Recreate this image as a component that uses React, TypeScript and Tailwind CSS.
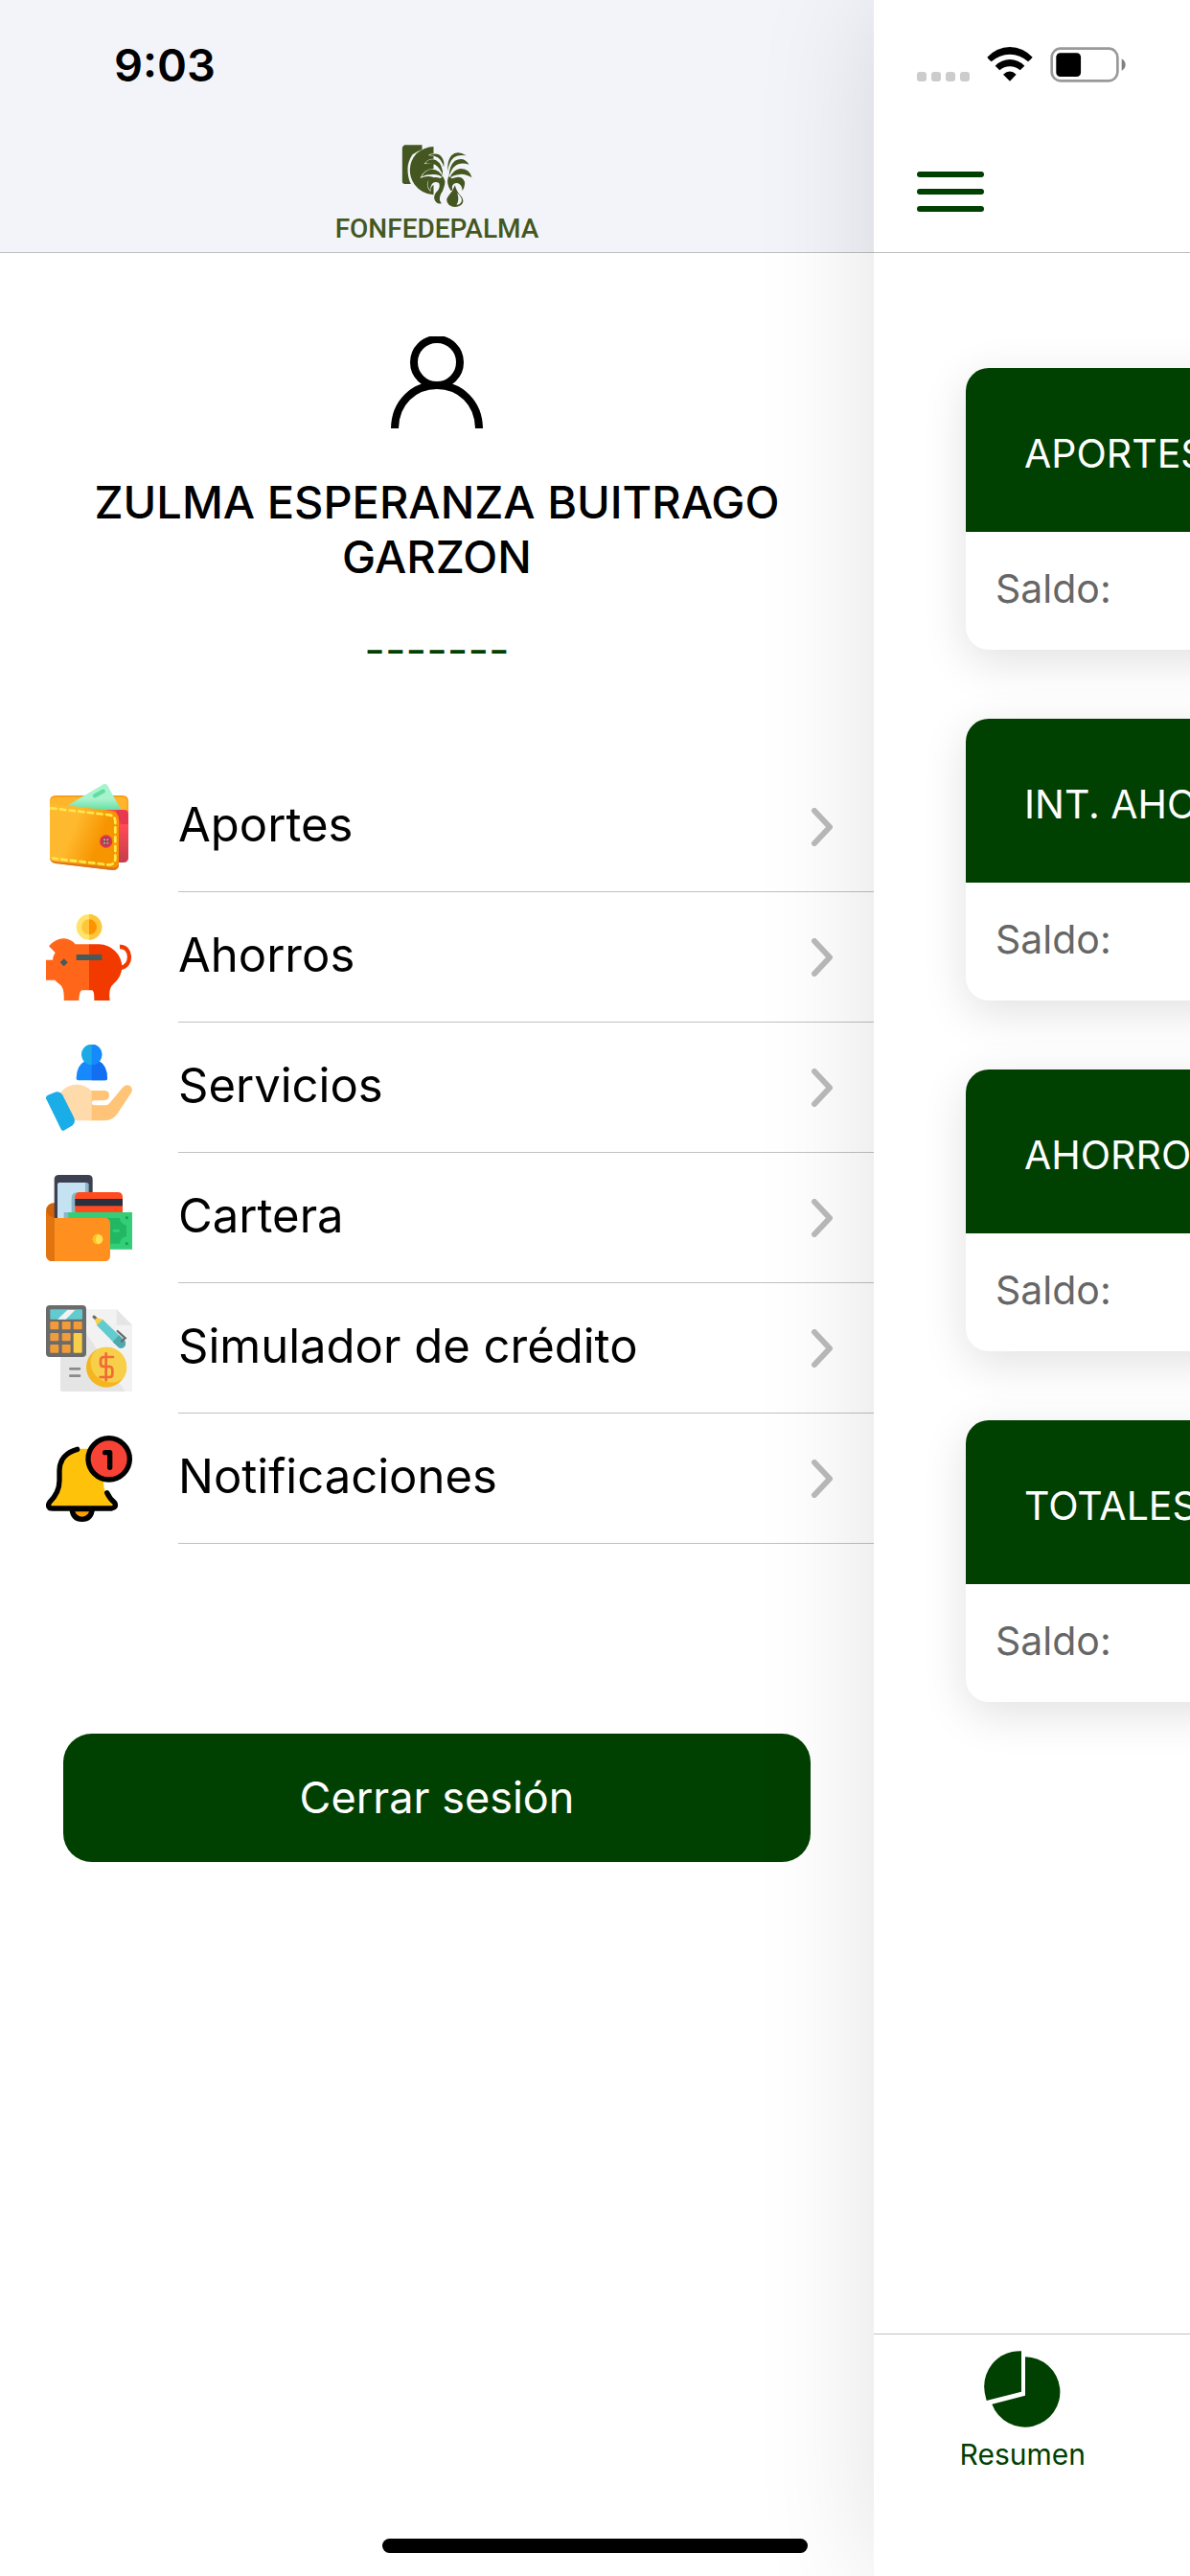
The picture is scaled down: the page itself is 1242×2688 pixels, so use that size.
import { useState } from 'react'
import type { ReactNode } from 'react'

type MenuItem = {
  label: string
  icon: ReactNode
}

function BrandMark() {
  return (
    <svg viewBox="350 60 230 201" className="w-[77px] h-[67px]" fill="#445720" aria-hidden="true">
      <path d="M363 64H417V78Q400 84 387 94Q372 116 372 140Q372 166 382 186H363Q355 186 355 178V73Q357 66 363 64Z" />
      <path d="M453 69V91Q444 90 436 96Q446 97 453 100V107Q434 106 423 124Q438 119 453 121V139Q424 138 411 168Q432 158 453 165V170Q432 172 433 187Q434 202 444 210Q442 196 453 188V220Q415 216 394 188Q378 166 379 140Q380 112 400 90Q424 70 453 69Z" />
      <path d="M440 96Q465 85 478 101Q488 114 485 133Q479 112 466 103Q456 97 440 96Z" />
      <path d="M427 121Q440 104 460 111Q483 124 482 160Q474 136 459 126Q444 119 427 121Z" />
      <path d="M415 163Q426 143 445 140Q473 139 482 166Q468 154 450 156Q430 156 415 163Z" />
      <path d="M443 207Q430 190 437 176Q449 160 474 168L482 163Q492 176 487 191Q483 207 476 217Q467 237 478 247Q459 250 455 231Q454 218 466 207Q475 195 470 183Q456 176 448 186Q442 194 443 207Z" />
      <path d="M497 146Q496 111 509 97Q527 78 555 97Q531 93 517 103Q502 115 497 146Z" />
      <path d="M501 165Q502 128 520 113Q548 99 564 125Q539 117 524 127Q507 139 501 165Z" />
      <path d="M503 169Q511 143 536 138Q566 138 573 166Q551 153 535 156Q514 157 503 169Z" />
      <path d="M500 162L511 169Q535 159 546 171Q557 185 543 208Q543 190 530 184Q517 180 512 191Q509 198 513 205L507 207Q491 184 500 162Z" />
      <path d="M520 190Q526 212 540 225Q552 241 539 252Q519 264 501 251Q488 238 500 223Q514 208 520 190Z" />
      <path d="M527 214Q544 230 541 240Q537 251 525 251Q535 237 527 214Z" fill="#f3f4f9" />
    </svg>
  )
}

function WalletIcon() {
  return (
    <svg viewBox="54 54 270 270" className="w-[90px] h-[90px]" aria-hidden="true">
      <defs>
        <linearGradient id="leather" x1="0" y1="0.2" x2="1" y2="0.6">
          <stop offset="0.35" stopColor="#ffb92e" />
          <stop offset="0.75" stopColor="#f79500" />
        </linearGradient>
        <linearGradient id="note" x1="0" y1="0" x2="0" y2="1">
          <stop offset="0.55" stopColor="#a7f3ce" />
          <stop offset="1" stopColor="#5fdc9b" />
        </linearGradient>
        <linearGradient id="lining" x1="0" y1="0" x2="0" y2="1">
          <stop offset="0.3" stopColor="#ff4b55" />
          <stop offset="1" stopColor="#c43d4b" />
        </linearGradient>
      </defs>
      <path d="M66 108Q66 90 84 90H294Q312 90 312 108V150H66Z" fill="#f9a01b" />
      <path d="M66 112Q68 96 88 96H290Q308 96 308 112V135H66Z" fill="#ffb52b" />
      <path d="M232 56Q239 50 246 58L292 140H200L120 122Z" fill="url(#note)" />
      <path d="M207 91L233 77" stroke="#62dda0" strokeWidth="13" strokeLinecap="round" />
      <path d="M240 135H298Q312 135 312 150V286Q312 300 296 300H270Z" fill="url(#lining)" />
      <path d="M272 136H298Q312 136 312 150V180H288Z" fill="#e8384f" />
      <path d="M66 115L258 138Q282 143 282 166V306Q282 324 262 324L84 303Q66 299 66 284Z" fill="url(#leather)" />
      <path d="M66 284Q68 295 84 297L262 316Q280 318 282 300V306Q282 324 262 324L84 303Q66 299 66 284Z" fill="#dc761c" />
      <path d="M70 130L252 151Q271 154 271 173V288Q269 308 248 307L76 287" fill="none" stroke="#ffe84d" strokeWidth="8" strokeLinecap="round" strokeDasharray="16 13" />
      <circle cx="242" cy="234" r="20" fill="#e0364c" />
      <circle cx="242" cy="234" r="14" fill="#b93650" />
      <g fill="#73e0a9">
        <circle cx="237" cy="229" r="3" />
        <circle cx="247" cy="229" r="3" />
        <circle cx="237" cy="239" r="3" />
        <circle cx="247" cy="239" r="3" />
      </g>
    </svg>
  )
}

function PiggyIcon() {
  return (
    <svg viewBox="54 462 270 270" className="w-[90px] h-[90px]" aria-hidden="true">
      <circle cx="189" cy="502" r="40" fill="#ffe36b" />
      <path d="M189 462A40 40 0 0 1 189 542Z" fill="#ffc63c" />
      <circle cx="189" cy="502" r="24" fill="#ffc63c" />
      <path d="M189 478A24 24 0 0 1 189 526Z" fill="#ff9200" />
      <path d="M285 564C323 562 326 625 287 630" fill="none" stroke="#f23a00" strokeWidth="13" />
      <path d="M63 562Q84 538 110 538Q132 539 146 556H190V700H166Q158 703 157 732H110Q112 696 100 684Q88 675 82 668H54V605H75Q76 592 83 582Z" fill="#ff661a" />
      <path d="M189 556H220Q250 557 270 577Q292 598 292 629Q290 659 265 680Q248 694 254 732H205Q206 702 198 700H189Z" fill="#f23a00" />
      <rect x="149" y="588" width="80" height="18" fill="#455a5a" />
      <path d="M110 601L122 613L110 625L98 613Z" fill="#455a5a" />
    </svg>
  )
}

function ServiceIcon() {
  return (
    <svg viewBox="54 60 270 270" className="w-[90px] h-[90px]" aria-hidden="true">
      <path d="M149 166Q149 125 178 110H218Q246 125 246 166Q246 172 240 172H155Q149 172 149 166Z" fill="#1689ff" />
      <path d="M197 110H218Q246 125 246 166Q246 172 240 172H197Z" fill="#136ff2" />
      <circle cx="197" cy="91" r="32" fill="#1baae5" />
      <path d="M197 59A32 32 0 0 1 197 123Z" fill="#1689ff" />
      <path d="M190 204H236Q252 204 252 219Q252 234 236 235H205Q197 236 197 242Q197 249 205 250H240Q248 250 254 242L294 194Q304 182 317 189Q328 198 321 211L278 276Q263 298 238 298H190Z" fill="#ffc478" />
      <path d="M100 209Q120 185 150 185Q178 185 197 206V298H140Z" fill="#ffdaaa" />
      <path d="M60 218L86 208Q98 206 105 216L141 287Q148 304 137 313L110 329Q104 331 101 325L54 229Q53 221 60 218Z" fill="#1aade8" />
    </svg>
  )
}

function CarteraIcon() {
  return (
    <svg viewBox="54 468 270 270" className="w-[90px] h-[90px]" aria-hidden="true">
      <path d="M54 580Q56 555 84 555V620H54Z" fill="#cf640c" />
      <path d="M80 482Q80 468 94 468H186Q200 468 200 482V610H80Z" fill="#3c4051" />
      <rect x="90" y="492" width="98" height="120" rx="7" fill="#8bb5c9" />
      <path d="M90 499Q90 492 97 492H177V523H150Q134 525 134 540V585H110V603H90Z" fill="#c5e2f3" />
      <path d="M145 538Q145 522 161 522H278Q294 522 294 538V590H145Z" fill="#ff4b20" />
      <rect x="145" y="543" width="149" height="22" fill="#2b2f3d" />
      <path d="M124 585H324V701H124Z" fill="#32cf78" />
      <path d="M240 603H285Q287 621 306 626V660Q287 664 285 683H240Z" fill="#22b763" />
      <circle cx="307" cy="602" r="5" fill="#1ba052" />
      <circle cx="307" cy="683" r="5" fill="#1ba052" />
      <path d="M267 643H281" stroke="#32cf78" strokeWidth="8" strokeLinecap="round" />
      <path d="M54 576Q57 603 84 603H238Q255 603 255 620V720Q255 738 238 738H75Q54 738 54 716Z" fill="#ff901f" />
      <path d="M54 576Q57 598 81 603V738H75Q54 738 54 716Z" fill="#e1740f" />
      <circle cx="216" cy="669" r="16" fill="#ffdf50" />
      <path d="M216 653A16 16 0 0 0 216 685Q202 669 216 653Z" fill="#ffc01e" />
    </svg>
  )
}

function SimulatorIcon() {
  return (
    <svg viewBox="54 66 270 270" className="w-[90px] h-[90px]" aria-hidden="true">
      <path d="M99 79H275L324 128V336H105Q99 336 99 330Z" fill="#f2f2f2" />
      <path d="M99 79H130L302 336H105Q99 336 99 330Z" fill="#e5e5e5" />
      <path d="M275 79L324 128H275Z" fill="#e5e5e5" />
      <rect x="54" y="66" width="126" height="162" rx="12" fill="#6b6b6b" />
      <rect x="67" y="79" width="101" height="31" rx="3" fill="#62cbcf" />
      <path d="M90 110L121 81H145L116 110Z" fill="#f2f2f2" />
      <g fill="#f19b3b">
        <rect x="67" y="117" width="27" height="25" rx="3" />
        <rect x="104" y="117" width="27" height="25" rx="3" />
        <rect x="140" y="117" width="27" height="25" rx="3" />
        <rect x="67" y="153" width="27" height="25" rx="3" />
        <rect x="104" y="153" width="27" height="25" rx="3" />
        <rect x="67" y="189" width="27" height="26" rx="3" />
        <rect x="104" y="189" width="27" height="26" rx="3" />
      </g>
      <rect x="140" y="153" width="27" height="62" rx="3" fill="#f7cf49" />
      <path d="M204 102L212 109" stroke="#6b6b6b" strokeWidth="9" strokeLinecap="round" />
      <path d="M207 111L213 105L234 111L214 131Z" fill="#f7cf49" />
      <path d="M213 129L232 111L300 176Q307 187 299 196Q289 205 279 196Z" fill="#62cbcf" />
      <path d="M263 181L282 160L300 176Q307 187 299 196Q289 205 279 196Z" fill="#4da9ac" />
      <path d="M278 147L302 169L291 179" fill="none" stroke="#6b6b6b" strokeWidth="7" strokeLinecap="round" />
      <path d="M130 265H159M130 287H159" stroke="#8a8a8a" strokeWidth="8" strokeLinecap="round" />
      <circle cx="243" cy="260" r="63" fill="#f5b51f" />
      <path d="M213 205A63 63 0 0 1 298 292Q270 318 232 303Q192 282 194 240Q196 220 213 205Z" fill="#f7cf49" />
      <path d="M264 228H236Q225 228 225 239V248Q225 258 236 258H252Q262 258 262 269V281Q262 291 252 291H224M242 217V301" fill="none" stroke="#ee6b38" strokeWidth="8" strokeLinecap="round" />
    </svg>
  )
}

function BellIcon() {
  return (
    <svg viewBox="54 474 270 270" className="w-[90px] h-[90px]" aria-hidden="true">
      <path d="M135 704H199Q195 736 167 736Q139 736 135 704Z" fill="#ff9f00" stroke="#000" strokeWidth="16" />
      <path d="M166 515C125 515 97 543 97 583V615Q95 655 64 685Q60 700 72 702H262Q273 699 268 687Q232 655 234 618L190 515Z" fill="#ffc20a" />
      <path d="M152 517C119 525 96 549 96 583V615Q96 652 65 683Q58 694 66 701Q69 702 74 702H260Q276 699 269 684Q253 671 245 653" fill="none" stroke="#000" strokeWidth="16" strokeLinecap="round" strokeLinejoin="round" />
      <circle cx="251" cy="547" r="65" fill="#f74336" stroke="#000" strokeWidth="16" />
      <path d="M239 527H254V574" fill="none" stroke="#000" strokeWidth="16" strokeLinecap="round" strokeLinejoin="round" />
    </svg>
  )
}

function UserIcon() {
  return (
    <svg viewBox="0 0 96 96" className="w-24 h-24" fill="none" stroke="#000" strokeWidth="8" aria-hidden="true">
      <circle cx="48" cy="27" r="24" />
      <path d="M4 97C4 69 24 51 48 51S92 69 92 97" />
    </svg>
  )
}

function Chevron() {
  return (
    <svg viewBox="0 0 24 40" className="w-6 h-10 shrink-0" fill="none" stroke="#bbb" strokeWidth="6" strokeLinecap="round" strokeLinejoin="round" aria-hidden="true">
      <path d="M4 3L20 20L4 37" />
    </svg>
  )
}

function StatusIcons() {
  return (
    <div className="flex items-end" aria-hidden="true">
      <div className="flex gap-[5px] pb-px">
        <span className="size-[10px] rounded-[3px] bg-[#ccc]" />
        <span className="size-[10px] rounded-[3px] bg-[#ccc]" />
        <span className="size-[10px] rounded-[3px] bg-[#ccc]" />
        <span className="size-[10px] rounded-[3px] bg-[#ccc]" />
      </div>
      <svg viewBox="395 87 144 108" className="ml-[18px] mb-px w-12 h-9">
        <path d="M396 119Q426 88 467 87Q508 88 538 119Q532 127 524 133Q499 110 467 110Q435 110 409 133Q401 127 396 119Z" />
        <path d="M421 146Q441 126 467 126Q493 126 513 146L499 160Q485 148 467 148Q449 148 435 160Z" />
        <path d="M446 173Q467 154 487 173L467 194Z" />
      </svg>
      <svg viewBox="594 86 240 112" className="ml-[18px] w-20 h-[37px]">
        <rect x="598" y="91" width="208" height="102" rx="28" fill="none" stroke="#999" strokeWidth="8" />
        <rect x="612" y="105" width="78" height="75" rx="13" />
        <path d="M819 123Q831 130 831 142Q831 154 819 161Z" fill="#808080" />
      </svg>
    </div>
  )
}

const menuItems: MenuItem[] = [
  { label: 'Aportes', icon: <WalletIcon /> },
  { label: 'Ahorros', icon: <PiggyIcon /> },
  { label: 'Servicios', icon: <ServiceIcon /> },
  { label: 'Cartera', icon: <CarteraIcon /> },
  { label: 'Simulador de crédito', icon: <SimulatorIcon /> },
  { label: 'Notificaciones', icon: <BellIcon /> }
]

const cards = ['APORTES', 'INT. AHORROS', 'AHORROS', 'TOTALES']

export default function App() {
  const [selected, setSelected] = useState('')

  return (
    <div className="relative flex min-h-screen overflow-hidden bg-white font-['Inter',sans-serif] text-black">
      <aside className="w-[912px] shrink-0">
        <header className="flex h-[264px] flex-col justify-between border-b border-[#c0c0c3] bg-[#f3f4f9] pt-10 pb-3">
          <time className="pl-[119px] text-[47px] leading-[56px] font-semibold">9:03</time>
          <div className="flex flex-col items-center gap-[10px] text-[#445720]">
            <BrandMark />
            <span className="font-['Roboto',sans-serif] text-[28px] leading-6 font-medium">FONFEDEPALMA</span>
          </div>
        </header>

        <section className="flex flex-col items-center px-20 pt-[87px] text-center text-[47px] leading-[57px]">
          <UserIcon />
          <h1 className="mt-12 font-medium">ZULMA ESPERANZA BUITRAGO GARZON</h1>
          <p className="mt-10 text-[#004000]">-------</p>
        </section>

        <nav className="mt-[89px]">
          {menuItems.map(item => (
            <button
              key={item.label}
              onClick={() => setSelected(item.label)}
              aria-pressed={selected === item.label}
              className="flex w-full items-center text-left"
            >
              <span className="w-[186px] pl-12">{item.icon}</span>
              <span className="flex h-[136px] flex-1 items-center justify-between border-b border-[#c0c0c3] pr-[42px] text-[49px]">
                <span className="pb-1">{item.label}</span>
                <Chevron />
              </span>
            </button>
          ))}
        </nav>

        <div className="px-[66px] pt-[198px]">
          <button className="h-[134px] w-full rounded-[30px] bg-[#004000] text-[45px] text-white">
            Cerrar sesión
          </button>
        </div>
      </aside>

      {/* Page pushed aside by the open drawer */}
      <main className="z-10 flex w-screen shrink-0 flex-col bg-white shadow-[0_0_120px_rgba(0,0,0,0.12)]">
        <header className="h-[264px] border-b border-[#c0c0c3] pt-[49px] pl-[45px]">
          <StatusIcons />
          <button aria-label="Menú" className="mt-[93px] flex w-[70px] flex-col gap-3">
            <span className="h-[6px] w-full rounded-full bg-[#004000]" />
            <span className="h-[6px] w-full rounded-full bg-[#004000]" />
            <span className="h-[6px] w-full rounded-full bg-[#004000]" />
          </button>
        </header>

        <div className="flex flex-col gap-[72px] px-24 pt-[120px] text-[41px]">
          {cards.map(card => (
            <article key={card} className="overflow-hidden rounded-3xl bg-white shadow-[0_12px_48px_rgba(0,0,0,0.12)]">
              <h2 className="flex h-[171px] items-center bg-[#004000] pt-2 pl-[61px] text-white">{card}</h2>
              <p className="flex h-[123px] items-center pb-1 pl-[31px] text-[#666]">Saldo:</p>
            </article>
          ))}
        </div>

        <footer className="mt-auto h-[253px] border-t border-[#c0c0c3]">
          <a href="#resumen" className="flex w-1/4 flex-col items-center gap-[10px] pt-[17px] text-[30px] leading-9 text-[#004000]">
            <svg viewBox="445 158 240 240" className="size-20" fill="#004000" aria-hidden="true">
              <path d="M562 159V286L453 314Q432 249 470 200Q505 158 562 159Z" />
              <path d="M574 177A110 110 0 1 1 470 325L574 298Z" />
            </svg>
            Resumen
          </a>
        </footer>
      </main>

      <div className="absolute bottom-6 left-1/2 z-20 h-[15px] w-[444px] -translate-x-1/2 rounded-full bg-black" />
    </div>
  )
}
